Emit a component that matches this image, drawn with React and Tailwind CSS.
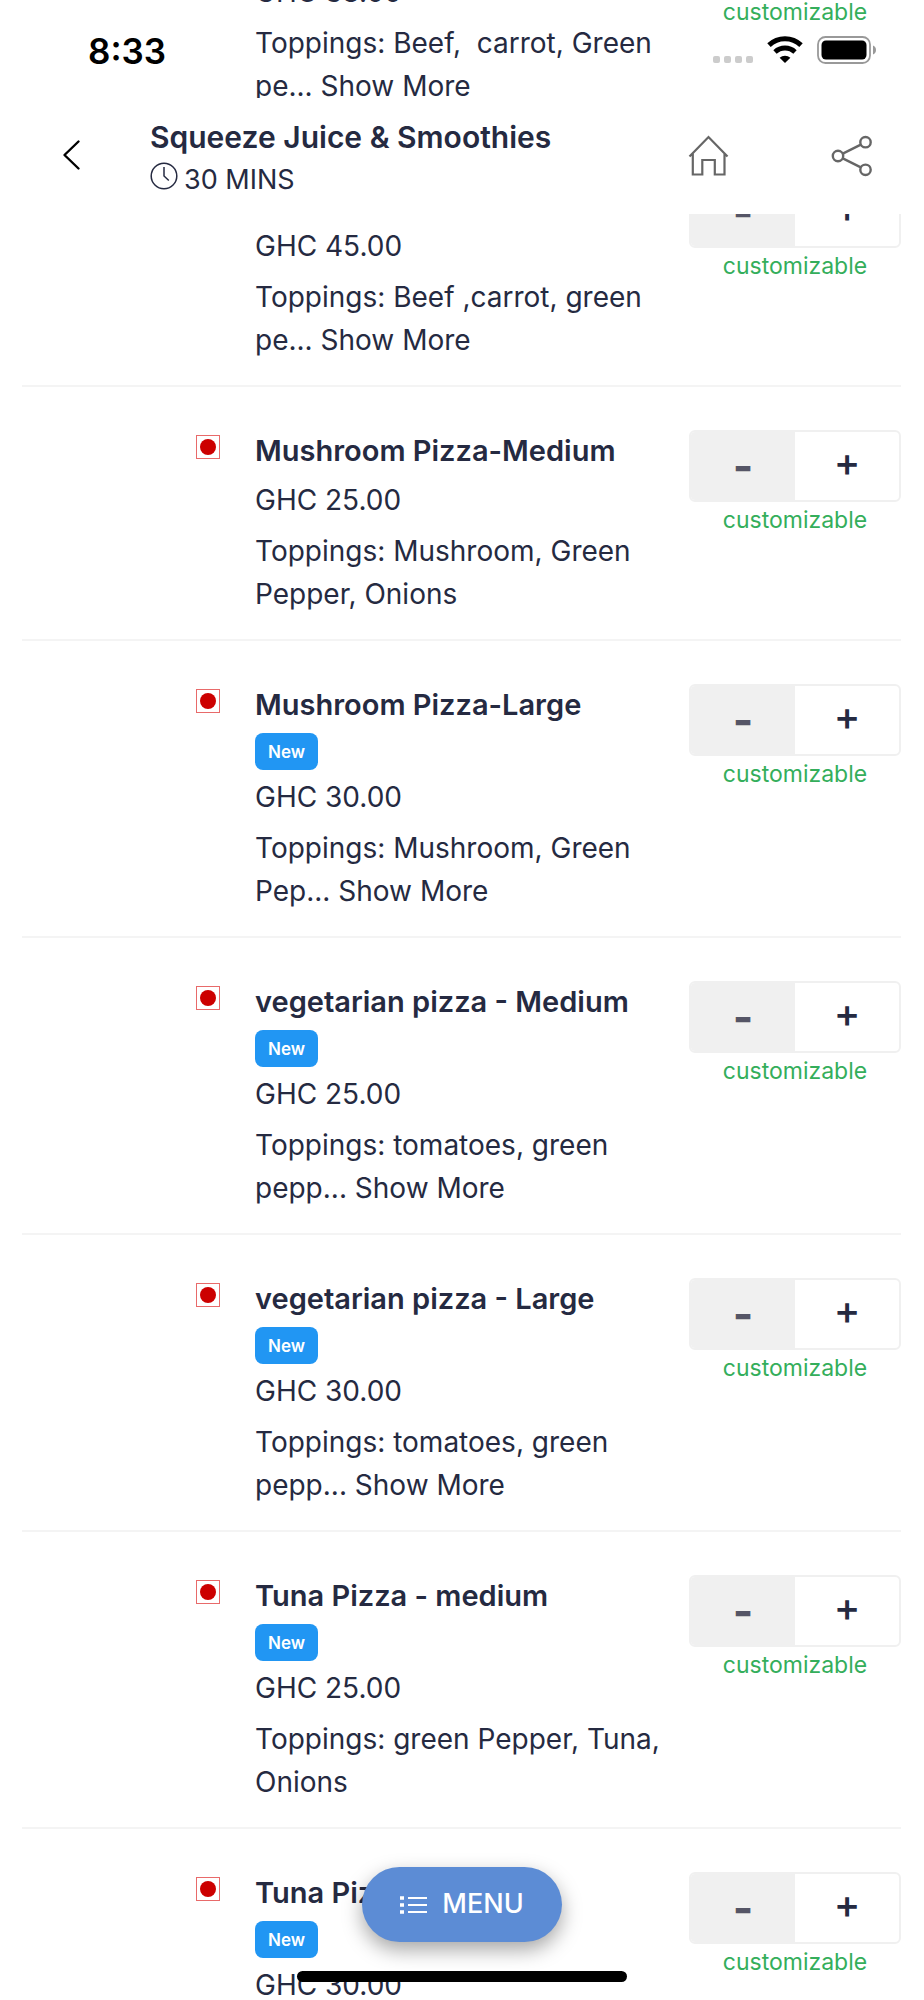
import { useState } from "react";

const items = [
  {
    id: 1,
    name: "Beef Pizza-Medium",
    price: "38.00",
    toppings: "Toppings: Beef,  carrot, Green pe...",
    more: true,
  },
  {
    id: 2,
    name: "Beef Pizza-Large",
    price: "45.00",
    toppings: "Toppings: Beef ,carrot, green pe...",
    more: true,
  },
  {
    id: 3,
    name: "Mushroom Pizza-Medium",
    price: "25.00",
    toppings: "Toppings: Mushroom, Green Pepper, Onions",
  },
  {
    id: 4,
    name: "Mushroom Pizza-Large",
    price: "30.00",
    toppings: "Toppings: Mushroom, Green Pep...",
    isNew: true,
    more: true,
  },
  {
    id: 5,
    name: "vegetarian pizza - Medium",
    price: "25.00",
    toppings: "Toppings: tomatoes, green pepp...",
    isNew: true,
    more: true,
  },
  {
    id: 6,
    name: "vegetarian pizza - Large",
    price: "30.00",
    toppings: "Toppings: tomatoes, green pepp...",
    isNew: true,
    more: true,
  },
  {
    id: 7,
    name: "Tuna Pizza - medium",
    price: "25.00",
    toppings: "Toppings: green Pepper, Tuna, Onions",
    isNew: true,
  },
  {
    id: 8,
    name: "Tuna Pizza - Large",
    price: "30.00",
    toppings: "Toppings: green Pepper, Tuna, Onions",
    isNew: true,
  },
];

function StatusBar() {
  return (
    <div className="absolute inset-x-0 top-0 flex h-[98px] items-start justify-between pt-[30px] pr-[47px] pl-[88px] text-black">
      <span className="text-[35px] leading-[42px] font-semibold">8:33</span>
      <div className="flex items-end gap-[14px] pt-[6px]">
        <div className="flex gap-1 pb-px">
          {[0, 1, 2, 3].map((dot) => (
            <span key={dot} className="h-[7px] w-[7px] rounded-xs bg-[#cccccc]" />
          ))}
        </div>
        <svg width="36" height="28" viewBox="0 0 36 28" fill="none" aria-hidden="true">
          <path d="M2 9.100a23.200 23.200 0 0 1 32 0" stroke="#000" strokeWidth="5" />
          <path d="M8 16a14.500 14.500 0 0 1 20 0" stroke="#000" strokeWidth="4.800" />
          <path d="M18 27l-5.400-5.200a8 8 0 0 1 10.800 0z" fill="#000" />
        </svg>
        <svg width="60" height="28" viewBox="0 0 60 28" fill="none" aria-hidden="true">
          <rect x="1" y="1" width="52" height="26" rx="7.500" stroke="#999" strokeWidth="1.800" />
          <rect x="4.500" y="4.500" width="45" height="19" rx="4.500" fill="#000" />
          <path d="M56 9.500c2 .8 3 2.500 3 4.500s-1 3.700-3 4.500z" fill="#999" />
        </svg>
      </div>
    </div>
  );
}

function Header() {
  return (
    <header className="absolute inset-x-0 top-[98px] flex h-[116px] items-start bg-white pr-[51px] pl-[60px]">
      <button type="button" aria-label="Back" className="mt-10 w-[90px]">
        <svg width="24" height="34" viewBox="0 0 24 34" fill="none" aria-hidden="true">
          <path d="M18.500 3.500L4.500 17l14 13.500" stroke="#000" strokeWidth="2.400" strokeLinecap="round" strokeLinejoin="round" />
        </svg>
      </button>
      <div className="flex-1 pt-[18px]">
        <h1 className="text-[30px] leading-[42px] font-semibold">Squeeze Juice &amp; Smoothies</h1>
        <p className="flex items-start gap-[6px] text-[27px] leading-[43px]">
          <svg className="mt-1" width="28" height="28" viewBox="0 0 28 28" fill="none" stroke="currentColor" strokeWidth="1.500" aria-hidden="true">
            <circle cx="14" cy="14" r="12.800" />
            <path d="M14 5v9l4.800 4.500" />
          </svg>
          30 MINS
        </p>
      </div>
      <div className="flex gap-[101px] pt-[37px] text-[#666666]">
        <button type="button" aria-label="Home">
          <svg width="42" height="42" viewBox="0 0 42 42" fill="none" stroke="currentColor" strokeWidth="2.200" aria-hidden="true">
            <path d="M1.500 21.500L20.500 2l19 19.500M4.800 18.500V39.500H14.300V25H26.800V39.500H36.500V18.500" />
          </svg>
        </button>
        <button type="button" aria-label="Share">
          <svg width="42" height="42" viewBox="0 0 42 42" fill="none" stroke="currentColor" strokeWidth="2.400" aria-hidden="true">
            <circle cx="7" cy="21" r="5.200" />
            <circle cx="34.500" cy="7.200" r="5.200" />
            <circle cx="34.500" cy="34.800" r="5.200" />
            <path d="M11.800 18.600l18-9M11.800 23.400l18 9" />
          </svg>
        </button>
      </div>
    </header>
  );
}

function VegMark() {
  return (
    <span className="mt-[5px] mr-[35px] flex h-6 w-6 shrink-0 items-center justify-center border border-[#e86a6a]">
      <span className="h-4 w-4 rounded-full bg-[#cc0000]" />
    </span>
  );
}

function Stepper({ name }) {
  const [, setCount] = useState(0);

  return (
    <div className="w-[212px] shrink-0 text-center">
      <div className="flex h-[72px] overflow-hidden rounded-md border-2 border-[#f0f0f0] leading-10">
        <button
          type="button"
          aria-label={`Remove ${name}`}
          onClick={() => setCount((count) => Math.max(0, count - 1))}
          className="flex-1 bg-[#f0f0f0] text-[44px] font-bold text-[#555566]"
        >
          -
        </button>
        <button
          type="button"
          aria-label={`Add ${name}`}
          onClick={() => setCount((count) => count + 1)}
          className="flex-1 pb-2 text-[40px] font-medium"
        >
          +
        </button>
      </div>
      <p className="text-[23px] leading-9 text-[#34ae5b]">customizable</p>
    </div>
  );
}

function MenuItem({ item }) {
  const { name, price, toppings, isNew, more } = item;

  return (
    <li className="flex items-start border-b-2 border-[#f4f4f4] pt-[43px] pb-[23px] pl-[174px]">
      <VegMark />
      <div className="flex-1 text-[28px] leading-[42px]">
        <h2 className="text-[29px] leading-[42px] font-semibold">{name}</h2>
        {isNew && (
          <span className="mt-[7px] -mb-px flex h-[37px] w-[63px] items-center justify-center rounded-lg bg-[#2196f3] text-[17px] font-semibold text-white">
            New
          </span>
        )}
        <p className="mt-[7px]">GHC {price}</p>
        <p className="mt-[9px] leading-[43px] whitespace-pre-wrap">
          {toppings}
          {more && " "}
          {more && <button type="button">Show More</button>}
        </p>
      </div>
      <Stepper name={name} />
    </li>
  );
}

function MenuButton() {
  return (
    <button
      type="button"
      className="flex h-[75px] items-center gap-[14px] rounded-full bg-[#5c8cd5] px-[38px] text-[27px] font-medium text-white shadow-[0_8px_20px_rgba(0,0,0,0.35)]"
    >
      <svg width="28" height="20" viewBox="0 0 28 20" fill="none" stroke="currentColor" aria-hidden="true">
        <path d="M0 3h4M0 10h4M0 17h4" strokeWidth="3.600" />
        <path d="M8 3h19M8 10h19M8 17h19" strokeWidth="1.800" />
      </svg>
      MENU
    </button>
  );
}

export default function App() {
  return (
    <div className="relative h-screen overflow-hidden bg-white font-[Inter,'Liberation_Sans',sans-serif] text-[#252a41]">
      {/* Menu list, scrolled part of the way under the header */}
      <main className="-mt-[121px] pr-[23px] pl-[22px]">
        <ul>
          {items.map((item) => (
            <MenuItem key={item.id} item={item} />
          ))}
        </ul>
      </main>

      <StatusBar />
      <Header />

      {/* Floating menu button and home indicator */}
      <div className="absolute inset-x-0 bottom-[18px] flex flex-col items-center gap-[29px]">
        <MenuButton />
        <span className="h-[11px] w-[330px] rounded-full bg-black" />
      </div>
    </div>
  );
}
